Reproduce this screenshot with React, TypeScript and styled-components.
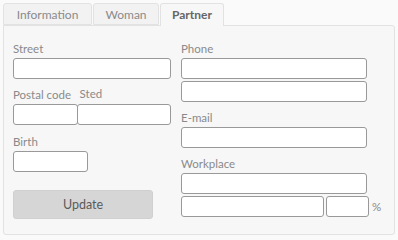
import * as React from 'react';
import styled, { createGlobalStyle } from 'styled-components';

const GlobalStyle = createGlobalStyle`
  body {
    margin: 0;
    background-color: #fafafa;
    font-family: Lato, "Open Sans", sans-serif;
    font-size: 11.5px;
  }
`;

const Page = styled.div`
  padding: 3px 0 0 3px;
  width: 392px;
`;

const TabBar = styled.div`
  display: flex;
  gap: 1px;
  position: relative;
  z-index: 1;
`;

const Tab = styled.div<{ $active?: boolean; $width: number }>`
  box-sizing: border-box;
  width: ${(p) => p.$width}px;
  height: ${(p) => (p.$active ? '23px' : '22px')};
  line-height: 21px;
  text-align: center;
  border: 1px solid #e2e2e2;
  border-bottom: ${(p) => (p.$active ? 'none' : '1px solid #e2e2e2')};
  border-radius: 3px 3px 0 0;
  background-color: ${(p) => (p.$active ? '#f7f7f7' : '#f2f2f2')};
  color: ${(p) => (p.$active ? '#666666' : '#8a8a8a')};
  font-weight: ${(p) => (p.$active ? 700 : 400)};
  font-size: 12px;
  margin-bottom: ${(p) => (p.$active ? '-1px' : '0')};
`;

const Panel = styled.div`
  box-sizing: border-box;
  height: 210px;
  border: 1px solid #e2e2e2;
  border-radius: 0 3px 3px 3px;
  background-color: #f7f7f7;
  padding: 15px 0 0 9px;
  display: grid;
  grid-template-columns: 158px 186px;
  column-gap: 10px;
  align-items: start;
`;

const Column = styled.div`
  display: flex;
  flex-direction: column;
`;

const Field = styled.div<{ $gap?: number }>`
  display: flex;
  flex-direction: column;
  margin-top: ${(p) => p.$gap ?? 0}px;
`;

const Label = styled.label<{ $indent?: number; $lift?: number }>`
  height: 16px;
  line-height: 16px;
  margin-bottom: 1px;
  padding-left: ${(p) => p.$indent ?? 0}px;
  color: #8a8a8a;
  position: relative;
  top: -${(p) => p.$lift ?? 0}px;
`;

const Input = styled.input<{ $width?: number }>`
  box-sizing: border-box;
  width: ${(p) => (p.$width ? `${p.$width}px` : '100%')};
  height: 21px;
  margin: 0;
  padding: 0 4px;
  border: 1px solid #999999;
  border-radius: 3px;
  background-color: #ffffff;
  font: inherit;
  outline: none;
`;

const SplitRow = styled.div`
  display: flex;
`;

const SplitPart = styled.div<{ $width: number; $overlap?: boolean }>`
  display: flex;
  flex-direction: column;
  width: ${(p) => p.$width}px;
  margin-left: ${(p) => (p.$overlap ? '-1px' : '0')};
`;

const InputRow = styled.div`
  display: flex;
  align-items: center;
  gap: 2px;
  margin-top: 2px;
  width: 200px;
`;

const Unit = styled.span`
  color: #8a8a8a;
  margin-left: 1px;
`;

const Button = styled.button`
  box-sizing: border-box;
  width: 140px;
  height: 29px;
  margin-top: 18px;
  border: 1px solid #d0d0d0;
  border-radius: 3px;
  background-color: #d6d6d6;
  color: #5a5a5a;
  font-family: inherit;
  font-size: 12.5px;
`;

export default function App() {
  return (
    <Page>
      <GlobalStyle />
      <TabBar>
        <Tab $width={89}>Information</Tab>
        <Tab $width={66}>Woman</Tab>
        <Tab $width={64} $active>Partner</Tab>
      </TabBar>
      <Panel>
        <Column>
          <Field>
            <Label>Street</Label>
            <Input />
          </Field>
          <SplitRow>
            <SplitPart $width={65}>
              <Field $gap={8}>
                <Label>Postal code</Label>
                <Input />
              </Field>
            </SplitPart>
            <SplitPart $width={95} $overlap>
              <Field $gap={8}>
                <Label $indent={3} $lift={1}>Sted</Label>
                <Input />
              </Field>
            </SplitPart>
          </SplitRow>
          <Field $gap={9}>
            <Label>Birth</Label>
            <Input $width={75} />
          </Field>
          <Button>Update</Button>
        </Column>
        <Column>
          <Field>
            <Label>Phone</Label>
            <Input />
            <Input style={{ marginTop: 2 }} />
          </Field>
          <Field $gap={8}>
            <Label>E-mail</Label>
            <Input />
          </Field>
          <Field $gap={8}>
            <Label>Workplace</Label>
            <Input />
            <InputRow>
              <Input $width={143} />
              <Input $width={43} />
              <Unit>%</Unit>
            </InputRow>
          </Field>
        </Column>
      </Panel>
    </Page>
  );
}
